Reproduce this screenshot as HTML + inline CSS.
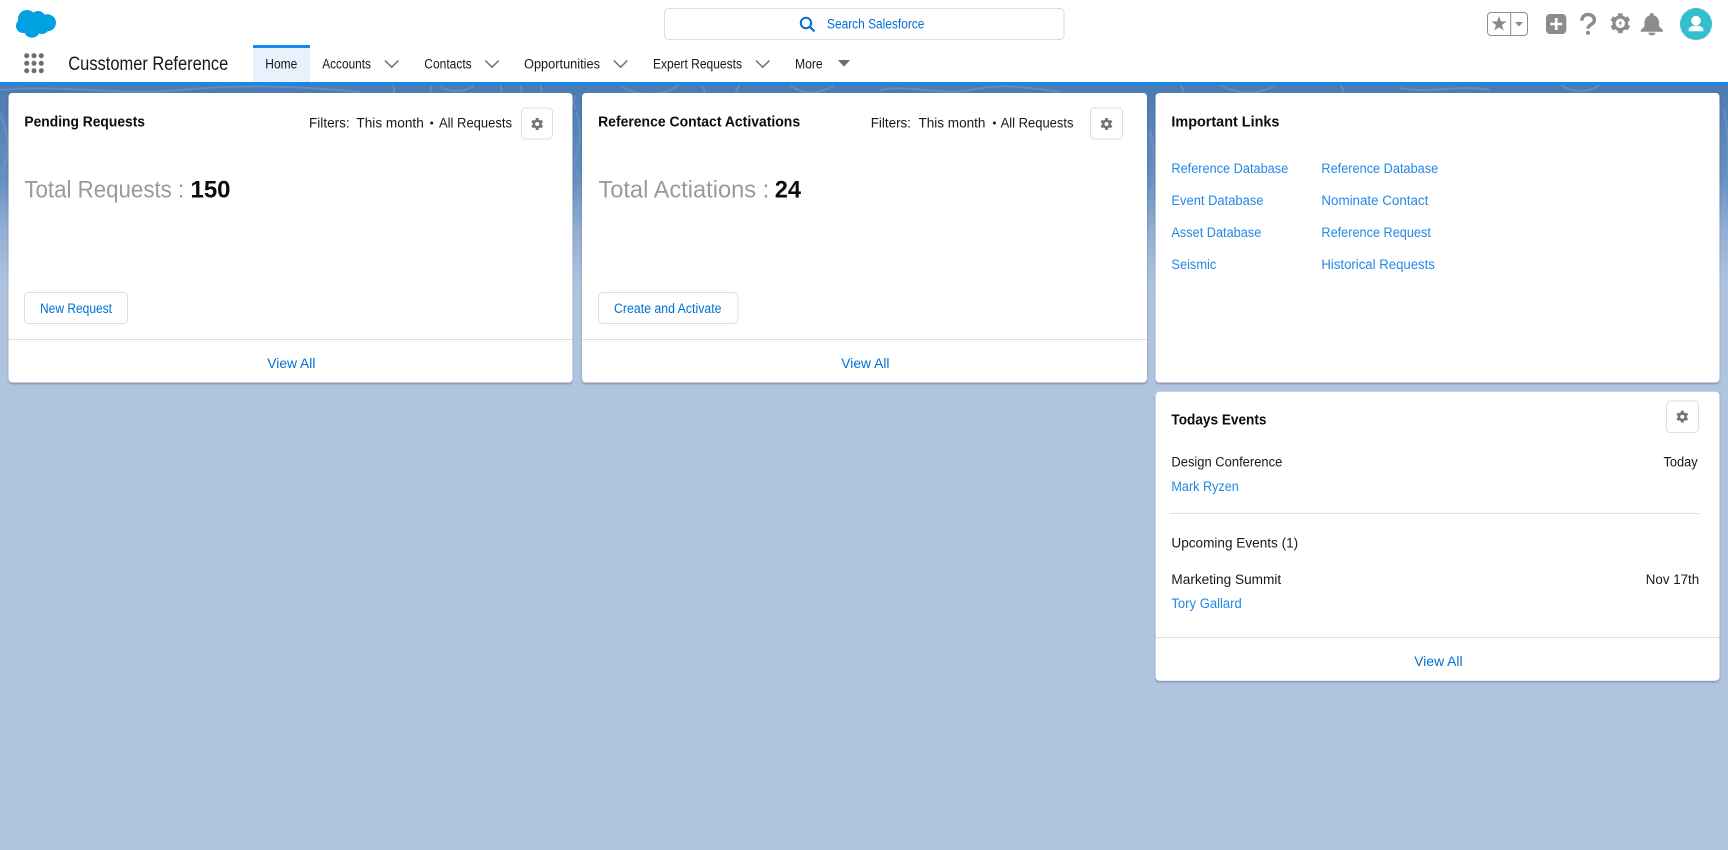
<!DOCTYPE html>
<html lang="en"><head><meta charset="utf-8"><title>Cusstomer Reference</title>
<style>
html,body{margin:0;padding:0;width:1728px;height:850px;overflow:hidden;background:#b0c4df}
svg{display:block;position:absolute;left:0;top:0}
text{font-family:"Liberation Sans",sans-serif;font-size:13.5px;fill:#181818}
.b{font-weight:700;font-size:15px;fill:#0c0c0c}
.l{fill:#2288e8}
.d{fill:#0070d2}
.big{font-size:24px;fill:#9a9a9a}
.bn{font-size:24px;font-weight:700;fill:#0c0c0c}
.card{fill:#fff;filter:url(#sh)}
.btn{fill:#fff;stroke:#d8dde6;stroke-width:1}
.ch{fill:none;stroke:#706e6b;stroke-width:1.5}
.ln{stroke:#dcdfe3;stroke-width:1}
</style></head><body>
<svg width="1728" height="850" viewBox="0 0 1728 850" xmlns="http://www.w3.org/2000/svg">
<defs>
<linearGradient id="bg" x1="0" y1="85" x2="0" y2="300" gradientUnits="userSpaceOnUse">
<stop offset="0" stop-color="#4b7ab0"/><stop offset=".44" stop-color="#6590c0"/><stop offset=".68" stop-color="#93afd4"/><stop offset=".91" stop-color="#adc2de"/><stop offset="1" stop-color="#b0c4df"/></linearGradient>
<linearGradient id="fd" x1="0" y1="85" x2="0" y2="240" gradientUnits="userSpaceOnUse"><stop offset="0" stop-color="#fff" stop-opacity=".13"/><stop offset="1" stop-color="#fff" stop-opacity="0"/></linearGradient>
<filter id="sh" x="-2%" y="-2%" width="104%" height="106%"><feDropShadow dx="0" dy="1.500" stdDeviation="1" flood-color="#000" flood-opacity=".28"/></filter>
<g id="gear"><g stroke="#757575" stroke-width="2.800"><path d="M0-6V6"/><path d="M-5.200-3L5.200 3"/><path d="M-5.200 3L5.200-3"/></g><circle r="4.600" fill="#757575"/><circle r="2" fill="#fff"/></g>
</defs>
<rect width="1728" height="850" fill="#b0c4df"/>
<rect y="85" width="1728" height="215" fill="url(#bg)"/>
<g fill="none" stroke="url(#fd)" stroke-width="2">
<path d="M0 90C60 84 120 96 180 90S300 86 360 92"/>
<path d="M392 85c3 3 3 6 0 9M430 85c2 3 2 6 0 9M440 85c6 8 26 8 34 0M500 85c2 3 2 6 0 9M520 85c2 3 2 6 0 9M540 85c2 3 2 6 0 9M620 85c16 12 44 12 58 0M700 85c6 5 6 9 2 9M740 85c-4 4-4 7-4 9M790 85c12 10 30 10 44 0"/>
<path d="M880 90c30-6 60 6 90 0s50-4 90 2M1180 85c4 4 4 6 2 9M1220 85c18 10 40 10 56 0M1340 85c4 4 4 6 2 9M1400 88c30 6 60-4 90 2M1560 85c14 8 28 8 40 0"/>
<path d="M576 112c8 20 2 36-2 52M576 170c8 14 6 30-2 44M576 96c-4 4-2 10 0 14"/>
<path d="M2 170c10-16 6-40-4-60M6 240c8-16 4-30-6-40"/>
<path d="M1150 130c6 24 6 50-2 76M1148 210c6 10 4 20 0 30"/>
<path d="M1724 110c6 30 4 70-2 100M1726 200c-4 14-2 24 2 36"/>
</g>

<!-- header -->
<rect width="1728" height="82" fill="#fff"/>
<rect y="82" width="1728" height="3" fill="#1589ee"/>
<g fill="#00a1e0"><circle cx="27" cy="19" r="9"/><circle cx="38" cy="19" r="8"/><circle cx="47.500" cy="22.800" r="8.500"/><circle cx="23" cy="26" r="7"/><circle cx="32" cy="29.500" r="8.200"/><circle cx="42" cy="27" r="7"/></g>
<g fill="#706e6b"><circle cx="26.700" cy="55.700" r="2.500"/><circle cx="34" cy="55.700" r="2.500"/><circle cx="41.300" cy="55.700" r="2.500"/><circle cx="26.700" cy="63.300" r="2.500"/><circle cx="34" cy="63.300" r="2.500"/><circle cx="41.300" cy="63.300" r="2.500"/><circle cx="26.700" cy="70.700" r="2.500"/><circle cx="34" cy="70.700" r="2.500"/><circle cx="41.300" cy="70.700" r="2.500"/></g>
<text x="68.300" y="70" style="font-size:19px" textLength="160" lengthAdjust="spacingAndGlyphs">Cusstomer Reference</text>
<rect x="253" y="48" width="57" height="34" fill="#e8f2fc"/><rect x="253" y="45" width="57" height="3" fill="#1589ee"/>
<text x="265.300" y="68.300" textLength="32" lengthAdjust="spacingAndGlyphs">Home</text>
<text x="322.200" y="68.300" textLength="48.800" lengthAdjust="spacingAndGlyphs">Accounts</text>
<path class="ch" d="M385 60.500l6.700 6.700 6.800-6.700"/>
<text x="424.300" y="68.300" textLength="47.400" lengthAdjust="spacingAndGlyphs">Contacts</text>
<path class="ch" d="M485.300 60.500l6.700 6.700 6.800-6.700"/>
<text x="524" y="68.300" textLength="76" lengthAdjust="spacingAndGlyphs">Opportunities</text>
<path class="ch" d="M613.900 60.500l6.700 6.700 6.800-6.700"/>
<text x="653" y="68.300" textLength="89" lengthAdjust="spacingAndGlyphs">Expert Requests</text>
<path class="ch" d="M756 60.500l6.700 6.700 6.800-6.700"/>
<text x="795" y="68.300" textLength="27.700" lengthAdjust="spacingAndGlyphs">More</text>
<path fill="#706e6b" d="M838 60h12l-6 6.800z"/>

<rect x="664.500" y="8.500" width="399.500" height="31" rx="4" fill="#fff" stroke="#d8dde6"/>
<circle cx="806" cy="23" r="5.200" fill="none" stroke="#0070d2" stroke-width="2"/><path d="M809.800 26.800l4.600 4.600" stroke="#0070d2" stroke-width="2.200" fill="none"/>
<text x="827" y="28.700" class="d" textLength="97.400" lengthAdjust="spacingAndGlyphs">Search Salesforce</text>

<rect x="1487.500" y="12.500" width="40" height="23" rx="3.500" fill="#fff" stroke="#8d8d8d"/><path d="M1510.700 12.500v23" stroke="#8d8d8d"/>
<polygon fill="#8a8a8a" points="1499,16 1500.900,21.400 1506.600,21.500 1502,25 1503.700,30.500 1499,27.200 1494.300,30.500 1496,25 1491.400,21.500 1497.100,21.400"/>
<path fill="#8a8a8a" d="M1515 22h8l-4 4.500z"/>
<rect x="1546" y="14" width="20.300" height="20" rx="4" fill="#8c8c8c"/><path d="M1556.200 18v12M1550.200 24h12" stroke="#fff" stroke-width="2.600"/>
<path d="M1581.800 20.800c0-4 2.800-6.300 6.300-6.300s6.300 2.200 6.300 5.600c0 4.500-6.300 4.600-6.300 8v.6" fill="none" stroke="#8c8c8c" stroke-width="3.400"/><circle cx="1588" cy="32.800" r="2.100" fill="#8c8c8c"/>
<g transform="translate(1620.300 23.300) scale(1.620)"><g stroke="#8c8c8c" stroke-width="3"><path d="M0-6.100V6.100"/><path d="M-5.300-3.050L5.300 3.050"/><path d="M-5.300 3.050L5.300-3.050"/></g><circle r="4.900" fill="#8c8c8c"/><circle r="2.900" fill="#fff"/><path d="M.7-2.300L-1.100.4h1L-.7 2.300 1.100-.5H.1z" fill="#8c8c8c"/></g>
<g fill="#8c8c8c"><circle cx="1651.800" cy="15" r="2"/><path d="M1651.800 15.200c-5 0-7.300 3.600-7.300 7.600v2.800c0 2.200-3.300 2.700-3.800 5v1.100h22.200v-1.100c-.5-2.300-3.800-2.800-3.800-5v-2.800c0-4-2.300-7.600-7.300-7.600z"/><path d="M1648.300 32.600h7c0 1.800-1.500 2.800-3.500 2.800s-3.500-1-3.500-2.800z"/></g>
<circle cx="1696" cy="24" r="16" fill="#34becd"/>
<g fill="#fff"><circle cx="1696" cy="20.700" r="4.800"/><path d="M1688.700 31.300v-1.600c0-2 1.800-3.300 4.200-3.700 2-.3 4.200-.3 6.200 0 2.400.4 4.200 1.700 4.200 3.700v1.600z"/></g>

<!-- card 1 -->
<rect class="card" x="8.500" y="93" width="564" height="289.500" rx="4"/>
<text x="24.400" y="126.300" class="b" textLength="120.600" lengthAdjust="spacingAndGlyphs">Pending Requests</text>
<text x="309" y="127.300" textLength="40.700" lengthAdjust="spacingAndGlyphs">Filters:</text>
<text x="356.400" y="127.300" textLength="67.400" lengthAdjust="spacingAndGlyphs">This month</text>
<circle cx="431.700" cy="123" r="1.500" fill="#181818"/>
<text x="439" y="127.300" textLength="73" lengthAdjust="spacingAndGlyphs">All Requests</text>
<rect class="btn" x="521.500" y="108" width="31" height="31" rx="4"/><use href="#gear" x="537.200" y="124"/>
<text x="24.400" y="197.300" class="big" textLength="159.800" lengthAdjust="spacingAndGlyphs">Total Requests :</text>
<text x="190.500" y="197.300" class="bn" textLength="40" lengthAdjust="spacingAndGlyphs">150</text>
<rect class="btn" x="24.500" y="292.500" width="103" height="31" rx="4"/>
<text x="40" y="313" class="d" textLength="72" lengthAdjust="spacingAndGlyphs">New Request</text>
<path class="ln" d="M8.500 339.500h564"/>
<text x="267.300" y="368" class="d" textLength="48.100" lengthAdjust="spacingAndGlyphs">View All</text>

<!-- card 2 -->
<rect class="card" x="582" y="93" width="565" height="289.500" rx="4"/>
<text x="598.100" y="126.300" class="b" textLength="202" lengthAdjust="spacingAndGlyphs">Reference Contact Activations</text>
<text x="870.700" y="127.300" textLength="40.300" lengthAdjust="spacingAndGlyphs">Filters:</text>
<text x="918.500" y="127.300" textLength="66.900" lengthAdjust="spacingAndGlyphs">This month</text>
<circle cx="994.400" cy="123" r="1.500" fill="#181818"/>
<text x="1000.600" y="127.300" textLength="72.900" lengthAdjust="spacingAndGlyphs">All Requests</text>
<rect class="btn" x="1090.500" y="108" width="32" height="31" rx="4"/><use href="#gear" x="1106.500" y="124"/>
<text x="598.400" y="197.300" class="big" textLength="170.800" lengthAdjust="spacingAndGlyphs">Total Actiations :</text>
<text x="774.700" y="197.300" class="bn" textLength="26.300" lengthAdjust="spacingAndGlyphs">24</text>
<rect class="btn" x="598.500" y="292.500" width="139.500" height="31" rx="4"/>
<text x="614" y="313" class="d" textLength="107.500" lengthAdjust="spacingAndGlyphs">Create and Activate</text>
<path class="ln" d="M582 339.500h565"/>
<text x="841.300" y="368" class="d" textLength="48.200" lengthAdjust="spacingAndGlyphs">View All</text>

<!-- card 3 -->
<rect class="card" x="1155.500" y="93" width="564" height="289.500" rx="4"/>
<text x="1171.400" y="126.300" class="b" textLength="108" lengthAdjust="spacingAndGlyphs">Important Links</text>
<text x="1171.400" y="172.800" class="l" textLength="116.800" lengthAdjust="spacingAndGlyphs">Reference Database</text>
<text x="1171.400" y="204.800" class="l" textLength="92.100" lengthAdjust="spacingAndGlyphs">Event Database</text>
<text x="1171.400" y="236.800" class="l" textLength="89.900" lengthAdjust="spacingAndGlyphs">Asset Database</text>
<text x="1171.400" y="268.800" class="l" textLength="44.900" lengthAdjust="spacingAndGlyphs">Seismic</text>
<text x="1321.400" y="172.800" class="l" textLength="116.800" lengthAdjust="spacingAndGlyphs">Reference Database</text>
<text x="1321.400" y="204.800" class="l" textLength="106.900" lengthAdjust="spacingAndGlyphs">Nominate Contact</text>
<text x="1321.400" y="236.800" class="l" textLength="109.500" lengthAdjust="spacingAndGlyphs">Reference Request</text>
<text x="1321.400" y="268.800" class="l" textLength="113.500" lengthAdjust="spacingAndGlyphs">Historical Requests</text>

<!-- card 4 -->
<rect class="card" x="1155.500" y="391.700" width="564" height="289" rx="4"/>
<text x="1171.400" y="424.300" class="b" textLength="95.100" lengthAdjust="spacingAndGlyphs">Todays Events</text>
<rect class="btn" x="1666.500" y="401" width="32" height="31.500" rx="4"/><use href="#gear" x="1682.300" y="416.700"/>
<text x="1171.400" y="466.300" textLength="110.900" lengthAdjust="spacingAndGlyphs">Design Conference</text>
<text x="1663.500" y="466.300" textLength="34.200" lengthAdjust="spacingAndGlyphs">Today</text>
<text x="1171.400" y="490.800" class="l" textLength="67.400" lengthAdjust="spacingAndGlyphs">Mark Ryzen</text>
<path class="ln" d="M1170 513.500h530"/>
<text x="1171.400" y="547.300" textLength="126.800" lengthAdjust="spacingAndGlyphs">Upcoming Events (1)</text>
<text x="1171.400" y="584" textLength="109.800" lengthAdjust="spacingAndGlyphs">Marketing Summit</text>
<text x="1645.800" y="584" textLength="53.400" lengthAdjust="spacingAndGlyphs">Nov 17th</text>
<text x="1171.400" y="608" class="l" textLength="70.400" lengthAdjust="spacingAndGlyphs">Tory Gallard</text>
<path class="ln" d="M1155.500 637.500h564"/>
<text x="1414.300" y="666" class="d" textLength="48.300" lengthAdjust="spacingAndGlyphs">View All</text>
</svg>
</body></html>
